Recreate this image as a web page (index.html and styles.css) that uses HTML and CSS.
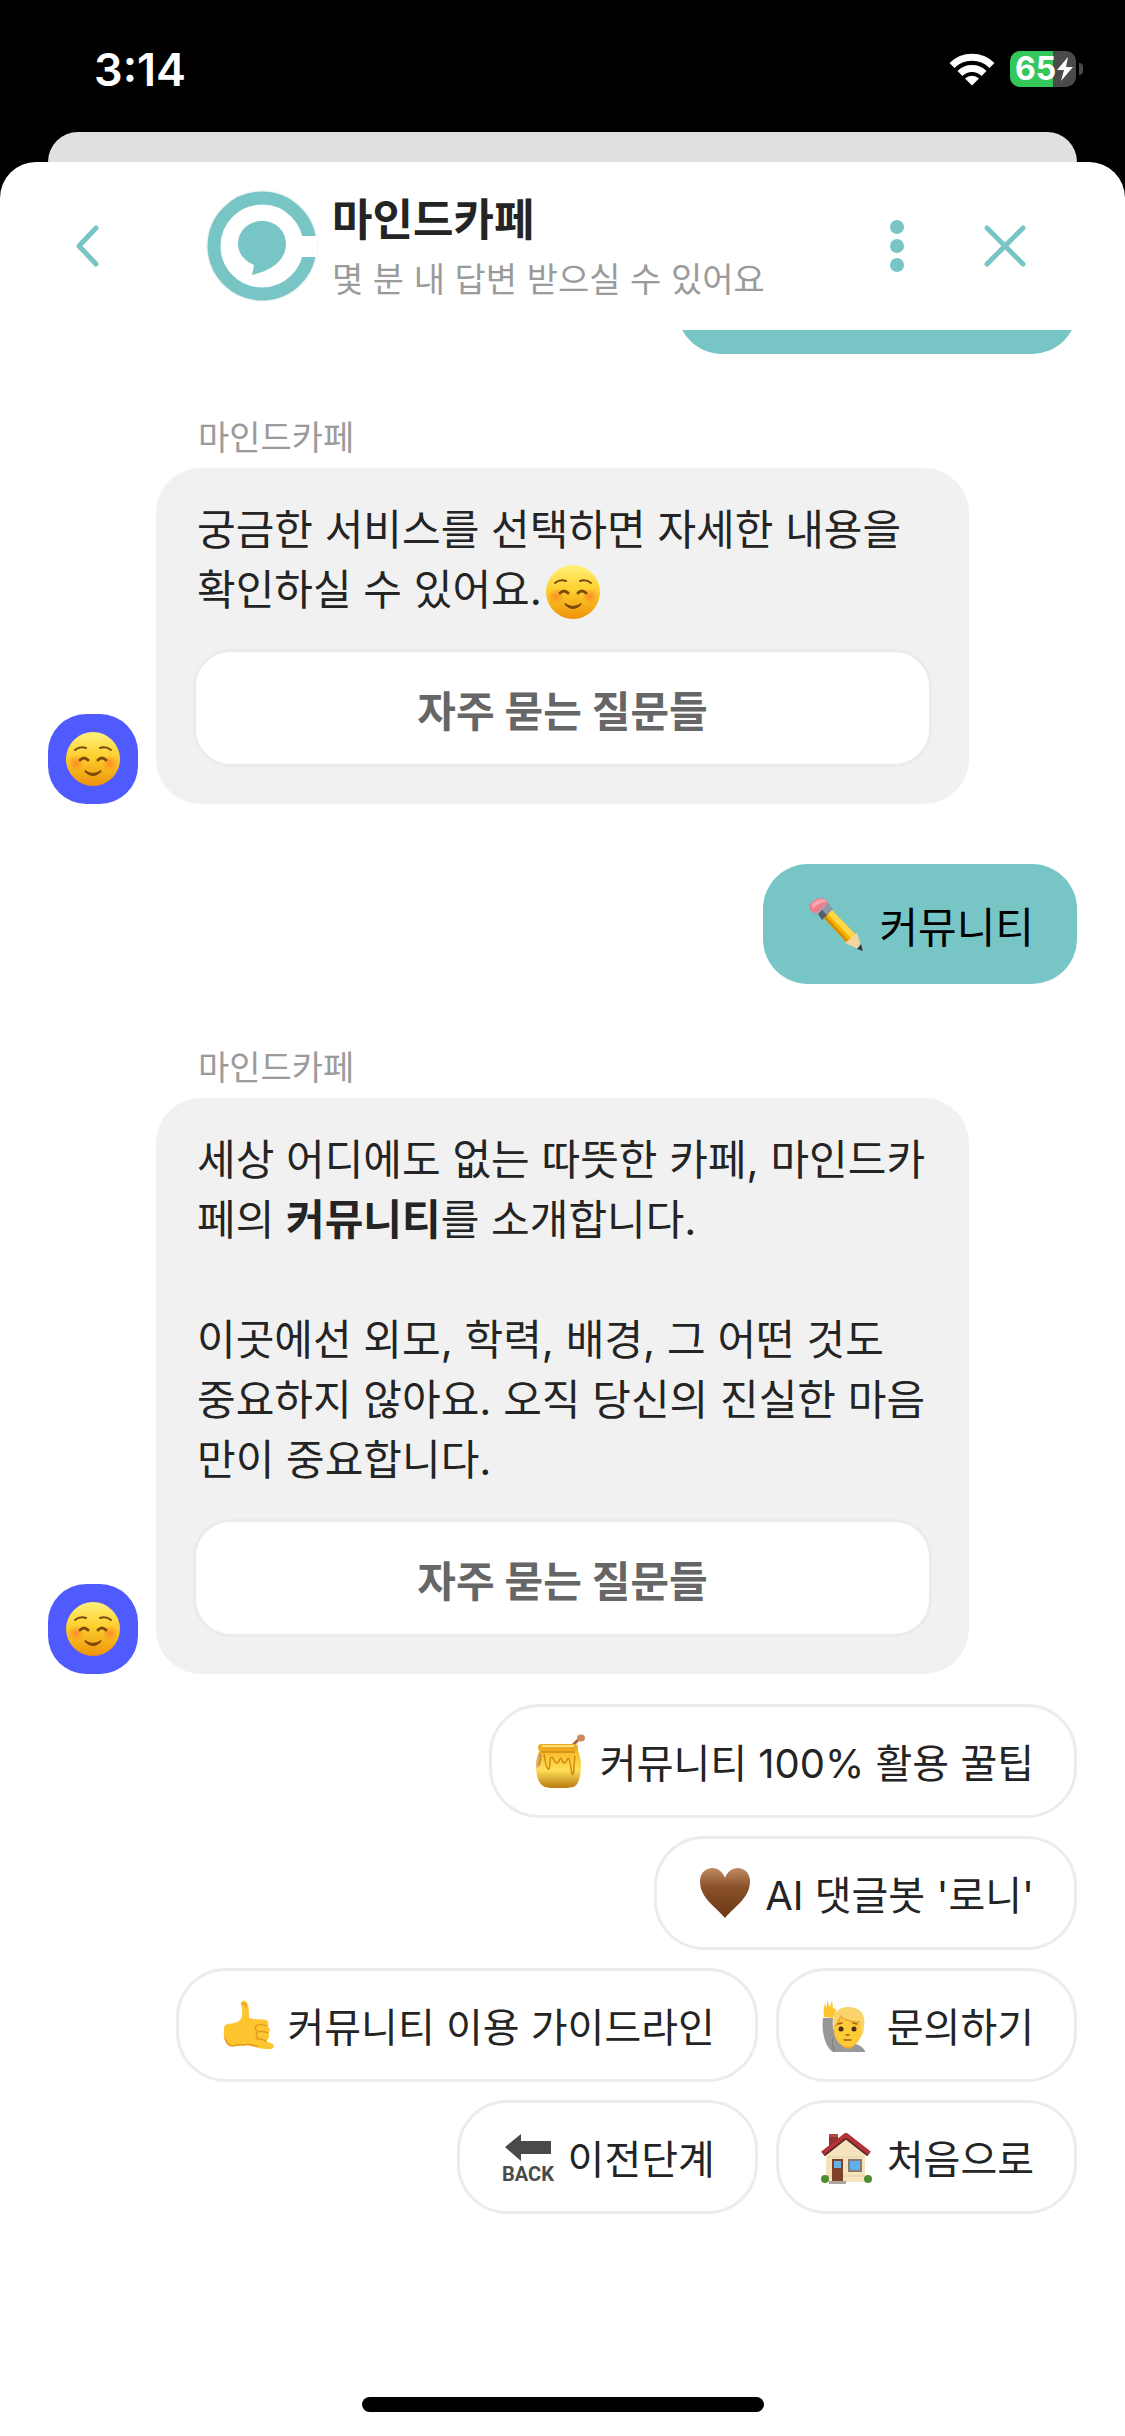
FILE: index.html
```html
<!DOCTYPE html>
<html lang="ko">
<head>
	<meta charset="UTF-8">
	<meta name="viewport" content="width=device-width, initial-scale=1.0">
	<title>마인드카페</title>
	<link rel="stylesheet" href="styles.css">
</head>
<body>
	<svg class="defs" width="0" height="0" aria-hidden="true">
		<defs>
			<linearGradient id="face" x1="0" y1="0" x2="0" y2="1">
				<stop offset="0" stop-color="#fff27a"/>
				<stop offset=".45" stop-color="#fdd02f"/>
				<stop offset="1" stop-color="#ee9208"/>
			</linearGradient>
			<radialGradient id="cheek">
				<stop offset="0" stop-color="#ff6a2b" stop-opacity=".6"/>
				<stop offset="1" stop-color="#ff6a2b" stop-opacity="0"/>
			</radialGradient>
			<linearGradient id="honey" x1="0" y1="0" x2="0" y2="1">
				<stop offset="0" stop-color="#f5b21c"/>
				<stop offset=".55" stop-color="#ffdf5a"/>
				<stop offset="1" stop-color="#b9780d"/>
			</linearGradient>
			<linearGradient id="heart" x1="0" y1="0" x2="0" y2="1">
				<stop offset="0" stop-color="#c08a64"/>
				<stop offset=".4" stop-color="#875029"/>
				<stop offset="1" stop-color="#6b3712"/>
			</linearGradient>
			<symbol id="smile" viewBox="0 0 54 54">
				<circle cx="27" cy="27" r="27" fill="url(#face)"/>
				<circle cx="10" cy="31" r="8" fill="url(#cheek)"/>
				<circle cx="44" cy="31" r="8" fill="url(#cheek)"/>
				<g fill="none" stroke="#7a4a0a" stroke-linecap="round">
					<path stroke-width="2" d="M9 18q5-4 11-2M34 16q6-2 11 2"/>
					<path stroke-width="3" d="M14 28q4-4 8 0M32 28q4-4 8 0"/>
				</g>
				<path fill="#7a4a0a" d="M19 38q8 6 16 0q1 0 0 2q-8 8-16 0q-1-2 0-2z"/>
			</symbol>
		</defs>
	</svg>

	<div class="status">
		<span class="time">3:14</span>
		<svg class="wifi" viewBox="0 0 46 34">
			<g fill="none" stroke="#fff" stroke-width="7">
				<path d="M3 13.500a28.500 28.500 0 0 1 40 0"/>
				<path d="M11 21.500a17 17 0 0 1 24 0"/>
			</g>
			<path fill="#fff" d="M16 26.500a10 10 0 0 1 14 0l-7 7z"/>
		</svg>
		<div class="battery">
			<span>65</span>
			<svg width="18" height="26" viewBox="0 0 18 26"><path d="M12 1L1 14h7L5 25l12-14h-7z"/></svg>
		</div>
		<div class="nub"></div>
	</div>

	<div class="back-sheet"></div>
	<div class="sheet">
		<header class="header">
			<button type="button" class="icon-btn back" aria-label="뒤로">
				<svg width="28" height="44" viewBox="0 0 28 44"><path d="M22 4L5 22l17 18"/></svg>
			</button>
			<svg class="logo" viewBox="0 0 112 112">
				<circle cx="56" cy="56" r="55" fill="#fff" stroke="#f4f4f4" stroke-width="2"/>
				<circle cx="56" cy="56" r="48" fill="none" stroke="#78c5c6" stroke-width="13"/>
				<path fill="#fff" d="M90 46h21v21H90z"/>
				<path fill="#78c5c6" d="M56 31c14 0 24 10 24 23c0 17-16 27-34 31l2-10c-9-4-16-11-16-21c0-13 10-23 24-23z"/>
			</svg>
			<div class="title">
				<h1>마인드카페</h1>
				<p>몇 분 내 답변 받으실 수 있어요</p>
			</div>
			<button type="button" class="icon-btn more" aria-label="메뉴">
				<svg width="20" height="56" viewBox="0 0 20 56"><circle cx="10" cy="9" r="7"/><circle cx="10" cy="28" r="7"/><circle cx="10" cy="47" r="7"/></svg>
			</button>
			<button type="button" class="icon-btn close" aria-label="닫기">
				<svg width="44" height="44" viewBox="0 0 44 44"><path d="M4 4l36 36M40 4L4 40"/></svg>
			</button>
		</header>

		<main class="chat">
			<div class="clipped"><div class="mine"></div></div>

			<section class="received">
				<div class="name">마인드카페</div>
				<div class="row">
					<div class="avatar"><svg class="emoji"><use href="#smile"/></svg></div>
					<div class="bubble">
						<p>궁금한 서비스를 선택하면 자세한 내용을<br>확인하실 수 있어요.<svg class="emoji"><use href="#smile"/></svg></p>
						<button type="button" class="faq">자주 묻는 질문들</button>
					</div>
				</div>
			</section>

			<div class="mine">
				<svg class="emoji" viewBox="0 0 54 54">
					<path fill="#f4b400" d="M12 18l8-8 28 29-9 8z"/>
					<path fill="#ffd84a" d="M16 14l4-4 28 29-4 4z"/>
					<path fill="#d78c00" d="M12 18l2-2 27 29-2 2z"/>
					<path fill="#f4d3a0" d="M36 46l12-10 6 18z"/>
					<path fill="#2f3a42" d="M48 52l4-5 2 7z"/>
					<path fill="#8d97a5" d="M9 17L19 6l5 6-11 11z"/>
					<path fill="#55606d" d="M9 17l4-4 5 5-5 5z"/>
					<path fill="#ef7f8c" d="M2 14C-1 9 1 5 6 3c5-3 9-2 11 0l2 3L7 17z"/>
					<path fill="#f7a9b0" d="M3 8C6 3 12 1 16 3l1 2Q8 6 4 12z"/>
				</svg>
				<span>커뮤니티</span>
			</div>

			<section class="received">
				<div class="name">마인드카페</div>
				<div class="row">
					<div class="avatar"><svg class="emoji"><use href="#smile"/></svg></div>
					<div class="bubble">
						<p>세상 어디에도 없는 따뜻한 카페, 마인드카<br>페의 <b>커뮤니티</b>를 소개합니다.<br><br>이곳에선 외모, 학력, 배경, 그 어떤 것도<br>중요하지 않아요. 오직 당신의 진실한 마음<br>만이 중요합니다.</p>
						<button type="button" class="faq">자주 묻는 질문들</button>
					</div>
				</div>
			</section>

			<div class="replies">
				<div class="reply-row">
					<button type="button" class="reply">
						<svg class="emoji" viewBox="0 0 54 54">
							<path stroke="#a5673f" stroke-width="3" d="M39 12l8-8"/>
							<ellipse cx="48" cy="4" rx="4" ry="3.500" fill="#c98a5e"/>
							<path fill="url(#honey)" d="M6 13h39c-1 4 3 8 3 18c0 12-3 21-8 22c-8 2-20 2-28 0C6 51 3 43 3 31C3 21 8 17 6 13z"/>
							<path fill="#e0b078" d="M5 21q-2 6-2 12q4 2 5-4l2-8z"/>
							<path fill="none" stroke="#d28a0b" stroke-width="1.500" d="M7 19c1 5 0 8-1 12M11 20q2 14 4 15t2-10q2-4 4 1q3 6 5 1q2-5 3-1q2 6 5 0q2-4 3 2l2 12q2 2 2-9l1-9"/>
							<rect x="5" y="10" width="40" height="7" rx="3.500" fill="#eeaa20"/>
							<path stroke="#ffe17a" stroke-width="2" d="M9 12h32"/>
							<path stroke="#d08716" stroke-width="1.500" d="M8 18h34"/>
						</svg>
						<span>커뮤니티 100% 활용 꿀팁</span>
					</button>
				</div>
				<div class="reply-row">
					<button type="button" class="reply">
						<svg class="emoji" viewBox="0 0 54 54">
							<path fill="url(#heart)" d="M27 52C17 40 2 32 2 15C2 7 8 2 14 2c6 0 11 4 13 10C29 6 34 2 40 2c6 0 12 5 12 13C52 32 37 40 27 52z"/>
						</svg>
						<span>AI 댓글봇 '로니'</span>
					</button>
				</div>
				<div class="reply-row">
					<button type="button" class="reply">
						<svg class="emoji" viewBox="0 0 54 54">
							<path fill="#fdc52f" d="M5 27C9 25 15 26 19 23C24 19 22 12 21 6C21 3 23 2 25 3C29 4 29 13 29 20C35 22 41 21 46 22C49 23 49 27 47 28C51 30 50 34 48 35C50 37 49 41 46 43L53 46C55 48 53 51 51 51C43 52 34 48 26 47C20 47 14 50 8 46C3 43 3 32 5 27z"/>
							<path fill="none" stroke="#e39b1c" stroke-width="1.500" stroke-linecap="round" d="M47 28q-7-3-11 0q-2 3 1 5M48 35q-7-3-11-1q-2 4 1 6M46 43q-6-3-9-2M26 47q-8-1-13 1q-6 0-8-8M27 46l10 2M22 6q3-2 4 3"/>
						</svg>
						<span>커뮤니티 이용 가이드라인</span>
					</button>
					<button type="button" class="reply">
						<svg class="emoji" viewBox="0 0 54 54">
							<path fill="#98989b" d="M3 20h10c-1 9 1 15 6 21c5 6 20 1 26 12v1H13C6 50 1 35 3 20z"/>
							<path fill="none" stroke="#7c7c80" d="M13 39q-2 6 1 14"/>
							<path fill="#fdc52f" d="M4 19C3 13 4 10 5 5l2 5V2l3 7 2-7 1 8 3 1c0 4-2 6-3 9z"/>
							<path fill="#eba72a" d="M22 42h12v6q-6 6-12 0z"/>
							<ellipse cx="28" cy="32" rx="14" ry="17" fill="#fdca38"/>
							<path fill="#fad36a" d="M14 29C11 17 17 9 28 9c12 0 18 7 16 19c0 5-1 8-3 11q1-6-1-15c-9 1-17-1-20-5q-1 6-6 10z"/>
							<path fill="none" stroke="#e2a236" stroke-width="1.500" d="M20 18q6 6 20 6M14 29q4-3 6-9"/>
							<g fill="#4b2c14"><circle cx="21" cy="31" r="2.500"/><circle cx="34" cy="31" r="2.500"/></g>
							<path fill="none" stroke="#a35b18" stroke-width="1.500" stroke-linecap="round" d="M24 42h7M18 26l4-1M33 25l4 1M26 37h3"/>
						</svg>
						<span>문의하기</span>
					</button>
				</div>
				<div class="reply-row">
					<button type="button" class="reply">
						<svg class="emoji" viewBox="0 0 54 54">
							<path fill="#4a4a4a" d="M4 17L20 4v7h30v13H20v7z"/>
							<text x="27" y="51" class="back-label">BACK</text>
						</svg>
						<span>이전단계</span>
					</button>
					<button type="button" class="reply">
						<svg class="emoji" viewBox="0 0 54 54">
							<path fill="#93352f" d="M9 4h9v18H9z"/>
							<path fill="#b5483d" d="M9 4h9v3H9z"/>
							<path fill="#f5e3c0" d="M6 23L26 7l19 16v29H6z"/>
							<path fill="none" stroke="#e4cda3" d="M7 27h37M7 46h37"/>
							<path fill="none" stroke="#5c2a28" stroke-width="6" stroke-linejoin="round" d="M3 24L26 6l23 18"/>
							<path fill="none" stroke="#b8323a" stroke-width="4" stroke-linejoin="round" d="M3 23L26 5l23 18"/>
							<rect x="12" y="29" width="11" height="23" fill="#7d4229"/>
							<rect x="14" y="31" width="7" height="7" fill="#67b3e4"/>
							<rect x="28" y="29" width="14" height="13" fill="#8a7a6c"/>
							<path fill="#5db2ee" d="M30 31h10v9H30z"/>
							<path fill="#aaa59d" d="M9 51h17v3H9z"/>
							<g fill="#4f8e2f"><circle cx="5" cy="49" r="4"/><circle cx="48" cy="49" r="4"/></g>
						</svg>
						<span>처음으로</span>
					</button>
				</div>
			</div>
		</main>

		<div class="home-bar"></div>
	</div>
</body>
</html>
```
FILE: styles.css
```css
*{margin: 0;padding: 0;box-sizing: border-box;}
body{
	display: flex;
	flex-direction: column;
	min-height: 100vh;
	background: #000;
	color: #242424;
	font-family: Inter, "Noto Sans CJK KR", sans-serif;
}
button{
	font-family: inherit;
	color: inherit;
	cursor: pointer;
}
.defs{position: absolute;}

/* status bar */
.status{
	display: flex;
	align-items: center;
	height: 132px;
	padding: 6px 42px 0 94px;
	color: #fff;
}
.time{
	flex: 1;
	font-size: 45px;
	font-weight: 600;
}
.wifi{
	width: 46px;
	height: 34px;
	margin-right: 15px;
}
.battery{
	display: flex;
	align-items: center;
	width: 66px;
	height: 36px;
	padding-left: 5px;
	border-radius: 10px;
	background: linear-gradient(90deg, #34c759 43px, #4a4a4c 43px);
	font-size: 32px;
	font-weight: 700;
	line-height: 36px;
}
.battery svg{
	flex: none;
	fill: #fff;
}
.nub{
	width: 4px;
	height: 12px;
	margin-left: 3px;
	border-radius: 0 4px 4px 0;
	background: #4a4a4c;
}

/* sheets */
.back-sheet{
	height: 30px;
	margin: 0 48px;
	border-radius: 30px 30px 0 0;
	background: #e0e0e0;
}
.sheet{
	display: flex;
	flex: 1;
	flex-direction: column;
	border-radius: 36px 36px 0 0;
	background: #fff;
}

/* header */
.header{
	display: flex;
	align-items: center;
	height: 168px;
	padding: 0 90px 0 64px;
}
.icon-btn{
	display: flex;
	align-items: center;
	justify-content: center;
	width: 60px;
	height: 60px;
	border: none;
	background: none;
}
.icon-btn svg{
	fill: none;
	stroke: #78c5c6;
	stroke-width: 5;
	stroke-linecap: round;
	stroke-linejoin: round;
}
.back{width: 48px;}
.more svg{
	fill: #78c5c6;
	stroke: none;
}
.close{margin-left: 48px;}
.logo{
	width: 112px;
	height: 112px;
	margin: 0 14px 0 94px;
}
.title{
	flex: 1;
	padding-top: 8px;
	line-height: 60px;
}
.title h1{
	font-size: 44px;
	font-weight: 700;
}
.title p{
	font-size: 34px;
	color: #9b9b9b;
}

/* messages */
.chat{
	display: flex;
	flex-direction: column;
	padding: 0 48px;
}
.clipped{
	display: flex;
	align-items: flex-end;
	justify-content: flex-end;
	height: 24px;
	overflow: hidden;
}
.clipped .mine{
	width: 400px;
	margin: 0;
}
.name{
	margin: 64px 0 10px 150px;
	font-size: 34px;
	line-height: 40px;
	color: #9b9b9b;
}
.row{
	display: flex;
	align-items: flex-end;
	gap: 18px;
}
.avatar{
	display: flex;
	align-items: center;
	justify-content: center;
	width: 90px;
	height: 90px;
	border-radius: 38px;
	background: #4f5bff;
}
.bubble{
	width: 813px;
	padding: 32px 37px 37px;
	border-radius: 45px;
	background: #f1f1f1;
}
.bubble p{
	margin: 0 -20px 29px 4px;
	font-size: 42px;
	line-height: 60px;
}
.emoji{
	flex: none;
	width: 54px;
	height: 54px;
}
.bubble .emoji{
	margin: -10px 0 -10px 4px;
	vertical-align: -4px;
}
.faq{
	width: 100%;
	height: 118px;
	border: 3px solid #ebebeb;
	border-radius: 38px;
	background: #fff;
	font-size: 42px;
	font-weight: 700;
	color: #666;
}
.mine{
	display: flex;
	align-items: center;
	align-self: flex-end;
	gap: 16px;
	height: 120px;
	margin-top: 60px;
	padding: 0 43px 0 46px;
	border-radius: 45px;
	background: #78c5c6;
	font-size: 42px;
	color: #000;
}

/* quick replies */
.replies{
	display: flex;
	flex-direction: column;
	gap: 18px;
	margin-top: 30px;
}
.reply-row{
	display: flex;
	justify-content: flex-end;
	gap: 18px;
}
.reply{
	display: flex;
	align-items: center;
	gap: 13px;
	height: 114px;
	padding: 0 40px 0 41px;
	border: 3px solid #ececec;
	border-radius: 50px;
	background: #fff;
	font-size: 40px;
}
.back-label{
	font-family: Roboto, sans-serif;
	font-size: 20px;
	font-weight: 700;
	text-anchor: middle;
	fill: #4a4a4a;
}

.home-bar{
	width: 402px;
	height: 15px;
	margin: auto auto 24px;
	border-radius: 8px;
	background: #000;
}
```
